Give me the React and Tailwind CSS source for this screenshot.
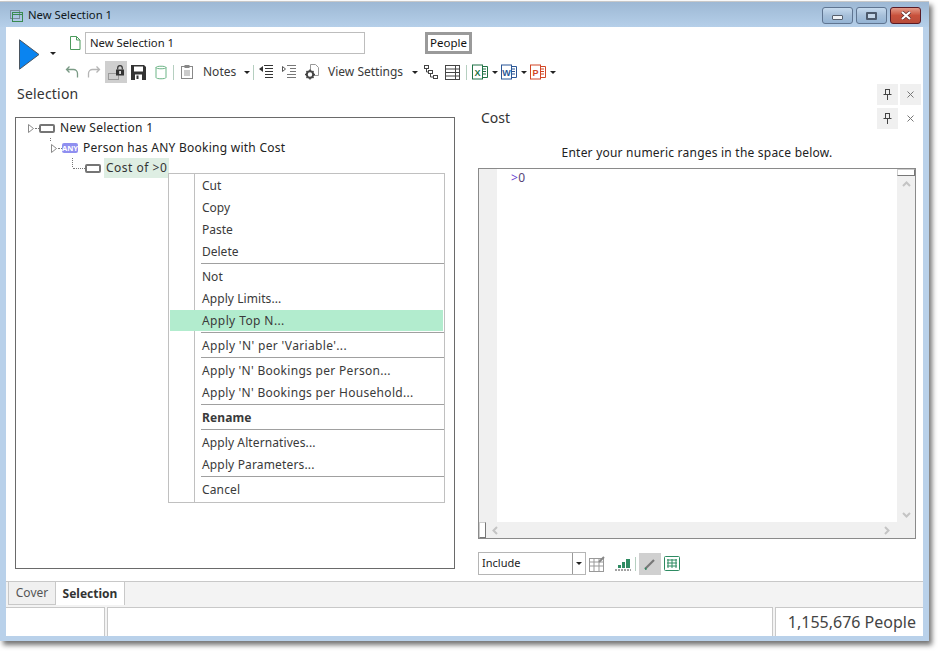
import React from "react";

const Caret = ({ className = "" }) => (
  <svg width="6" height="3" viewBox="0 0 6 3" className={"shrink-0 " + className}><path d="M0 0h6L3 3z" fill="#222" /></svg>
);
const Sep = () => <div className="w-px h-[15px] bg-[#b5cfc0] shrink-0" />;

const Play = () => (
  <svg width="21" height="31" viewBox="0 0 21 31" className="shrink-0"><path d="M.5.8 L20 15.500 L.5 30.200 Z" fill="#0a84f0" stroke="#4a5560" strokeWidth="1" /></svg>
);
const DocIcon = () => (
  <svg width="12" height="14" viewBox="0 0 12 14"><path d="M1.5.5h6l3.500 3.500v9.500h-9.500z M7.500.5v3.500h3.500" fill="#fff" stroke="#4c9a5c" /></svg>
);
const Undo = ({ flip, color }) => (
  <svg width="14" height="14" viewBox="0 0 14 14" className="shrink-0" style={flip ? { transform: "scaleX(-1)" } : undefined}>
    <path d="M1.500 4.500h7a4 4 0 0 1 4 4v4M4.500 1.500l-3 3 3 3" fill="none" stroke={color} strokeWidth="1.300" />
  </svg>
);
const Lock = () => (
  <div className="w-[22px] h-[22px] bg-[#cfcfcf] flex items-center justify-center shrink-0">
    <svg width="16" height="15" viewBox="0 0 16 15">
      <rect x="0.500" y="8.500" width="10" height="6" fill="none" stroke="#9a9a9a" />
      <rect x="8" y="4.500" width="8" height="6" fill="#333" />
      <path d="M9.700 4.500V3a2.300 2.300 0 0 1 4.600 0v1.500" fill="none" stroke="#333" strokeWidth="1.200" />
      <rect x="11.300" y="6" width="1.500" height="3" fill="#fff" />
    </svg>
  </div>
);
const Save = () => (
  <svg width="15" height="15" viewBox="0 0 15 15" className="shrink-0"><path d="M0 0h13l2 2v13H0z" fill="#333" /><rect x="3" y="1.500" width="9" height="5" fill="#fff" /><rect x="4" y="9.500" width="7" height="5.500" fill="#fff" /><rect x="5.500" y="10.500" width="2" height="3.500" fill="#333" /></svg>
);
const Db = () => (
  <svg width="12" height="15" viewBox="0 0 12 15" className="shrink-0"><path d="M1 2.500C1 .8 11 .8 11 2.500v10c0 1.700-10 1.700-10 0z M1 2.500c0 1.700 10 1.700 10 0" fill="none" stroke="#6db587" /></svg>
);
const Clip = () => (
  <svg width="12" height="14" viewBox="0 0 12 14" className="shrink-0"><rect x="0.500" y="1.500" width="11" height="12" fill="none" stroke="#888" /><rect x="3.500" y="0" width="5" height="3" fill="#888" /><path d="M3 6h6M3 8h6M3 10h6" stroke="#999" /></svg>
);
const OutdentL = () => (
  <svg width="14" height="14" viewBox="0 0 14 14" className="shrink-0"><path d="M0 4l4-3v6z" fill="#333" /><path d="M5 .5h9M6 3.500h8M6 6.500h8M6 9.500h8M6 12.500h8" stroke="#333" /></svg>
);
const OutdentR = () => (
  <svg width="14" height="14" viewBox="0 0 14 14" className="shrink-0"><path d="M.5 1.500l3 2.500-3 2.500z" fill="#fff" stroke="#555" /><path d="M5 .5h9M8 3.500h6M8 6.500h6M5 9.500h9M5 12.500h9" stroke="#777" /></svg>
);
const GearDoc = () => (
  <svg width="15" height="16" viewBox="0 0 15 16" className="shrink-0">
    <path d="M6.500 .5h5l3 3v8h-8z" fill="#fff" stroke="#999" />
    <circle cx="6" cy="10.500" r="3.200" fill="#fff" stroke="#444" strokeWidth="2" />
    <path d="M6 5.500v1.500M6 14v1.500M1 10.500h1.500M9.500 10.500H11M2.500 7l1 1M8.500 13l1 1M2.500 14l1-1M8.500 8l1-1" stroke="#444" strokeWidth="1.500" />
  </svg>
);
const TreeIcon = () => (
  <svg width="14" height="14" viewBox="0 0 14 14" fill="none" stroke="#444" className="shrink-0"><rect x="0.500" y="0.500" width="4" height="3" /><rect x="4.500" y="5.500" width="4" height="3" /><rect x="9.500" y="10.500" width="4" height="3" /><path d="M2.500 4v3h2M6.500 9v3h3" /></svg>
);
const Grid = () => (
  <svg width="15" height="15" viewBox="0 0 15 15" fill="none" stroke="#444" className="shrink-0"><rect x="0.500" y="0.500" width="14" height="14" /><path d="M.5 4h14M.5 7.500h14M.5 11h14M10.500.5v14" /></svg>
);
const Office = ({ c, l }) => (
  <svg width="16" height="16" viewBox="0 0 16 16" className="shrink-0">
    <path d="M9 2.500h6.500v11H9" fill="#fff" stroke={c} />
    <path d="M11 5h3M11 7.500h3M11 10h3" stroke={c} />
    <rect x="0.500" y="1" width="10" height="14" fill="#fff" stroke={c} />
    <text x="5.500" y="11.500" textAnchor="middle" fontSize="9" fontWeight="700" fontFamily="Liberation Sans, sans-serif" fill={c}>{l}</text>
  </svg>
);
const Pin = () => (
  <svg width="9" height="11" viewBox="0 0 9 11"><path d="M2 .5h5M2.500.5v4.500M6.500.5v4.500M.5 5.500h8M4.500 5.500V11" stroke="#444" fill="none" /></svg>
);
const XIcon = () => (
  <svg width="7" height="7" viewBox="0 0 7 7"><path d="M.5.5l6 6M6.500.5l-6 6" stroke="#777" /></svg>
);
const PinBtns = ({ plainClose }) => (
  <div className="flex gap-[2px]">
    <div className="w-[21px] h-[21px] bg-[#f0f0f0] flex items-center justify-center"><Pin /></div>
    <div className={(plainClose ? "" : "bg-[#f0f0f0] ") + "w-[21px] h-[21px] flex items-center justify-center"}><XIcon /></div>
  </div>
);
const Expander = () => (
  <svg width="7" height="9" viewBox="0 0 7 9" className="shrink-0"><path d="M.5.5l5 4-5 4z" fill="#fff" stroke="#8a8a8a" /></svg>
);
const Node = () => <div className="w-[16px] h-[9px] border-2 border-[#757575] rounded-[2px] shrink-0" />;
const Dash = ({ w }) => <div className="border-t border-dotted border-[#777] shrink-0" style={{ width: w }} />;

const WinBtn = ({ red, children }) => (
  <div
    className={
      red
        ? "w-[31px] h-[17px] rounded-[3px] border border-[#5a1a24] bg-gradient-to-b from-[#e39a88] via-[#c8513c] to-[#b84c3a] flex items-center justify-center"
        : "w-[31px] h-[17px] rounded-[3px] border border-[#5f7591] bg-gradient-to-b from-[#c6daee] via-[#a7c0da] to-[#94b4d4] flex items-center justify-center"
    }
  >
    {children}
  </div>
);

const Item = ({ children, hi, bold, t = "" }) => (
  <div className={"relative h-[22px] flex items-center pl-[33px] whitespace-nowrap " + (bold ? "font-bold " : "") + t}>
    {hi && <div className="absolute left-[1px] right-[1px] top-[1px] bottom-0 bg-[#b2ecce]" />}
    <span className="relative mt-[2px]">{children}</span>
  </div>
);
const MSep = () => (
  <div className="h-[3px] pl-[32px] flex items-center"><div className="h-px w-full bg-[#a0a0a0]" /></div>
);

const ContextMenu = () => (
  <div className="absolute left-[152px] top-[55px] w-[277px] h-[330px] bg-white border border-[#c0c0c0] text-[12px] text-[#3a3a3a]">
    <div className="absolute left-[25px] top-0 bottom-0 w-px bg-[#c0c0c0]" />
    <Item>Cut</Item>
    <Item>Copy</Item>
    <Item>Paste</Item>
    <Item>Delete</Item>
    <MSep />
    <Item>Not</Item>
    <Item t="tracking-[0.07px]">Apply Limits...</Item>
    <Item hi t="tracking-[0.4px]">Apply Top N...</Item>
    <MSep />
    <Item t="tracking-[0.35px]">Apply 'N' per 'Variable'...</Item>
    <MSep />
    <Item t="tracking-[0.3px]">Apply 'N' Bookings per Person...</Item>
    <Item t="tracking-[0.3px]">Apply 'N' Bookings per Household...</Item>
    <MSep />
    <Item bold t="tracking-[0.1px]">Rename</Item>
    <MSep />
    <Item t="tracking-[0.1px]">Apply Alternatives...</Item>
    <Item t="tracking-[0.15px]">Apply Parameters...</Item>
    <MSep />
    <Item t="tracking-[0.15px]">Cancel</Item>
  </div>
);

export default function App() {
  return (
    <div className="w-[938px] h-[651px] bg-white overflow-hidden" style={{ fontFamily: '"Noto Sans", "Open Sans", sans-serif' }}>
      <div className="w-[929px] h-[640px] mt-[1px] bg-[#b9d1ea] shadow-[3px_4px_5px_rgba(0,0,0,0.55)] border-t border-[#c8c8c8] px-[6px] pb-[5px] flex flex-col relative">
        {/* Title bar */}
        <div className="-mx-[6px] h-[25px] shrink-0 bg-gradient-to-b from-[#9db8d4] to-[#b5cfe9] flex items-center pt-[2px] pl-[10px] pr-[8px]">
          <svg width="13" height="12" viewBox="0 0 13 12" fill="none"><rect x="0.500" y="0.500" width="9" height="8" stroke="#7a8a9a" /><rect x="2.500" y="2.500" width="10" height="9" stroke="#3a8a50" /><path d="M3 4.500h9" stroke="#3a8a50" /></svg>
          <span className="ml-[5px] text-[11.3px] text-[#101820]">New Selection 1</span>
          <div className="flex-1" />
          <div className="flex gap-[3px]">
            <WinBtn><div className="w-[11px] h-[5px] bg-[#eef2f6] border border-[#56606e] rounded-[1px] mt-[4px]" /></WinBtn>
            <WinBtn><div className="w-[11px] h-[8px] bg-[#c4d6e8] border-2 border-[#4c5a6c] rounded-[1px]" /></WinBtn>
            <WinBtn red>
              <svg width="12" height="9" viewBox="0 0 12 9"><path d="M2 1l8 7M10 1L2 8" stroke="#5a2a2a" strokeWidth="3.500" /><path d="M2 1l8 7M10 1L2 8" stroke="#fff" strokeWidth="2.200" /></svg>
            </WinBtn>
          </div>
        </div>

        {/* Client area */}
        <div className="flex-1 bg-white flex flex-col min-h-0">
          {/* Toolbar */}
          <div className="h-[57px] shrink-0 flex">
            <div className="w-[58px] pl-[13px] pt-[12px] flex items-start shrink-0">
              <Play />
              <Caret className="ml-[10px] mt-[13px]" />
            </div>
            <div className="flex flex-col">
              <div className="flex items-center h-[22px] mt-[5px]">
                <div className="w-[21px] flex justify-center"><DocIcon /></div>
                <div className="w-[280px] h-[22px] border border-[#bdbdbd] flex items-center pl-[4px] text-[11.3px] text-[#222]">New Selection 1</div>
                <div className="ml-[60px] h-[22px] w-[47px] border-[3px] border-[#9a9a9a] flex items-center justify-center text-[11.5px] text-[#111]">People</div>
              </div>
              <div className="flex items-center h-[22px] mt-[7px] ml-[1px] text-[12px] text-[#3a3a3a] whitespace-nowrap">
                <Undo color="#7a9a85" />
                <div className="w-[8px] shrink-0" />
                <Undo flip color="#b5b5b5" />
                <div className="w-[4px] shrink-0" />
                <Lock />
                <div className="w-[4px] shrink-0" />
                <Save />
                <div className="w-[9px] shrink-0" />
                <Db />
                <div className="w-[6px] shrink-0" />
                <Sep />
                <div className="w-[7px] shrink-0" />
                <Clip />
                <div className="w-[10px] shrink-0" />
                <span className="w-[36px] shrink-0">Notes</span>
                <Caret className="ml-[5px]" />
                <div className="w-[3px] shrink-0" />
                <Sep />
                <div className="w-[5px] shrink-0" />
                <OutdentL />
                <div className="w-[9px] shrink-0" />
                <OutdentR />
                <div className="w-[8px] shrink-0" />
                <GearDoc />
                <div className="w-[9px] shrink-0" />
                <span className="w-[77px] shrink-0">View Settings</span>
                <Caret className="ml-[7px]" />
                <div className="w-[6px] shrink-0" />
                <TreeIcon />
                <div className="w-[7px] shrink-0" />
                <Grid />
                <div className="w-[6px] shrink-0" />
                <Sep />
                <div className="w-[5px] shrink-0" />
                <Office c="#217346" l="X" />
                <Caret className="ml-[4px]" />
                <div className="w-[3px] shrink-0" />
                <Office c="#2b5797" l="W" />
                <Caret className="ml-[4px]" />
                <div className="w-[3px] shrink-0" />
                <Office c="#d24726" l="P" />
                <Caret className="ml-[4px]" />
              </div>
            </div>
          </div>

          {/* Main split */}
          <div className="flex-1 min-h-0 flex pl-[9px]">
            {/* Left pane */}
            <div className="w-[440px] shrink-0 flex flex-col">
              <div className="h-[33px] text-[14px] tracking-[0.2px] leading-[20px] text-[#333] pl-[2px] shrink-0">Selection</div>
              <div className="relative h-[452px] border border-[#6a6a6a] text-[12px] text-[#222]">
                <div className="absolute left-[34px] top-[20px] w-px h-[3px] border-l border-dotted border-[#777]" />
                <div className="absolute left-[56px] top-[40px] w-px h-[9px] border-l border-dotted border-[#777]" />
                <div className="h-[20px] flex items-center pl-[12px] tracking-[0.27px]">
                  <Expander />
                  <Dash w={4} />
                  <Node />
                  <span className="ml-[5px]">New Selection 1</span>
                </div>
                <div className="h-[20px] flex items-center pl-[35px] tracking-[0.25px]">
                  <Expander />
                  <Dash w={4} />
                  <div className="w-[16px] h-[10px] rounded-[2px] bg-[#8f8ff0] text-white text-[7.5px] font-bold tracking-normal leading-[10px] text-center shrink-0">ANY</div>
                  <span className="ml-[5px]">Person has ANY Booking with Cost</span>
                </div>
                <div className="h-[20px] flex items-center pl-[57px]">
                  <Dash w={12} />
                  <Node />
                  <span className="ml-[3px] h-[20px] bg-[#deeee3] px-[2px] flex items-center text-[#333] tracking-[0.5px]">Cost of &gt;0</span>
                </div>
                <ContextMenu />
              </div>
            </div>

            {/* Right pane */}
            <div className="flex-1 min-w-0 flex flex-col pl-[23px]">
              <div className="h-[45px] shrink-0 relative">
                <div className="absolute left-[399px] top-0"><PinBtns /></div>
                <div className="absolute left-[399px] top-[24px]"><PinBtns plainClose /></div>
                <div className="absolute left-[3px] top-[23px] text-[14px] text-[#333] leading-[22px]">Cost</div>
              </div>
              <div className="h-[39px] shrink-0 flex items-end justify-center pb-[6px] text-[12px] tracking-[0.22px] text-[#222] w-[438px]">Enter your numeric ranges in the space below.</div>
              <div className="w-[438px] h-[371px] border border-[#8a8a8a] flex flex-col shrink-0">
                <div className="flex-1 flex min-h-0">
                  <div className="w-[18px] bg-[#f0f0f0] shrink-0" />
                  <div className="flex-1 pl-[14px] text-[12px] tracking-[0.4px] leading-[18px] text-[#6a3fd0]">&gt;<span className="text-[#554477]">0</span></div>
                  <div className="w-[18px] bg-[#f0f0f0] shrink-0 flex flex-col items-center">
                    <div className="w-[18px] h-[7px] bg-white border border-[#ccc] border-b-[#777] border-r-[#777]" />
                    <svg width="9" height="6" viewBox="0 0 9 6" className="mt-[5px]"><path d="M1 5l3.500-3.500L8 5" fill="none" stroke="#c4c4c4" strokeWidth="2" /></svg>
                    <div className="flex-1" />
                    <svg width="9" height="6" viewBox="0 0 9 6" className="mb-[4px]"><path d="M1 1l3.500 3.500L8 1" fill="none" stroke="#c4c4c4" strokeWidth="2" /></svg>
                  </div>
                </div>
                <div className="h-[16px] shrink-0 bg-[#f0f0f0] flex items-center">
                  <div className="w-[7px] h-[16px] bg-white border border-[#ccc] border-r-[#777] border-b-[#777]" />
                  <svg width="6" height="9" viewBox="0 0 6 9" className="ml-[6px]"><path d="M5 1L1.500 4.500 5 8" fill="none" stroke="#c4c4c4" strokeWidth="2" /></svg>
                  <div className="flex-1" />
                  <svg width="6" height="9" viewBox="0 0 6 9" className="mr-[25px]"><path d="M1 1l3.500 3.500L1 8" fill="none" stroke="#c4c4c4" strokeWidth="2" /></svg>
                </div>
              </div>
              <div className="flex items-center h-[23px] mt-[13px] shrink-0">
                <div className="w-[108px] h-[23px] border border-[#b5b5b5] flex items-center text-[11px] text-[#222] pl-[3px] relative">
                  Include
                  <div className="absolute right-0 top-0 bottom-0 w-[13px] border-l border-[#999] flex items-center justify-center"><Caret /></div>
                </div>
                <svg width="17" height="16" viewBox="0 0 17 16" className="ml-[3px]" fill="none" stroke="#999"><rect x="0.500" y="2.500" width="14" height="13" /><path d="M.5 6h14M5 3v12M10 3v12M.5 10h14" /><path d="M10 6l5-5" stroke="#888" strokeWidth="2" /></svg>
                <svg width="16" height="14" viewBox="0 0 16 14" className="ml-[9px]"><rect x="3" y="8" width="3" height="3" fill="#2e8b62" /><rect x="7" y="5" width="3" height="6" fill="#2e8b62" /><rect x="11" y="2" width="4" height="9" fill="#2e8b62" /><path d="M0 13h16" stroke="#444" strokeDasharray="2 1" /></svg>
                <div className="w-px h-[14px] bg-[#b5cfc0] ml-[4px]" />
                <div className="w-[22px] h-[22px] bg-[#d0d0d0] ml-[3px] flex items-center justify-center">
                  <svg width="12" height="12" viewBox="0 0 12 12"><path d="M1 11L10 2" stroke="#777" strokeWidth="2.200" /><path d="M1 11l1.500-.5" stroke="#2e8b62" strokeWidth="2" /></svg>
                </div>
                <svg width="16" height="15" viewBox="0 0 16 15" className="ml-[3px]" fill="none" stroke="#2e8b62"><rect x="0.500" y="0.500" width="15" height="14" rx="1" /><path d="M4 3v9M8 3v9M12 3v9M3 4h10M3 7h10M3 10h10" /></svg>
              </div>
            </div>
          </div>

          {/* Tabs */}
          <div className="h-[26px] shrink-0 bg-[#f3f3f3] border-t border-[#c8c8c8] flex pl-[2px] text-[12px]">
            <div className="h-[23px] w-[48px] border border-t-0 border-[#c8c8c8] bg-[#f0f0f0] flex items-center justify-center text-[#555]">Cover</div>
            <div className="h-[23px] w-[69px] border-r border-[#c8c8c8] bg-white flex items-center justify-center font-bold text-[#333]">Selection</div>
          </div>
          {/* Status */}
          <div className="h-[29px] shrink-0 flex gap-[2px] bg-[#f3f3f3]">
            <div className="w-[99px] bg-white border-t border-r border-[#c8c8c8]" />
            <div className="flex-1 bg-white border-t border-x border-[#c8c8c8]" />
            <div className="w-[148px] bg-white border-t border-l border-[#c8c8c8] flex items-center justify-end pr-[7px] text-[16px] text-[#444]">1,155,676 People</div>
          </div>
        </div>
      </div>
    </div>
  );
}
